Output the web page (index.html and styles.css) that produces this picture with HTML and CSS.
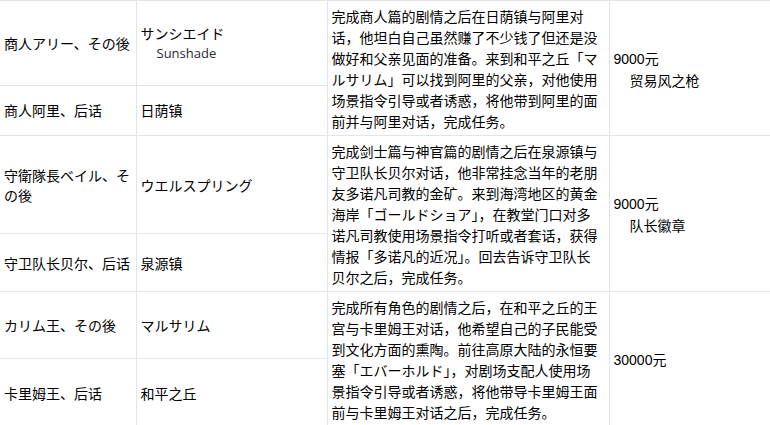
FILE: index.html
```html
<!DOCTYPE html>
<html lang="zh-CN">
<head>
<meta charset="utf-8">
<title>任务表</title>
<link rel="stylesheet" href="styles.css">
</head>
<body>
<table class="quests">
  <colgroup>
    <col class="c1"><col class="c2"><col class="c3"><col class="c4">
  </colgroup>
  <tbody>
    <tr class="r1a">
      <td lang="ja">商人アリー、その後</td>
      <td lang="ja">サンシエイド<span class="sub latin">Sunshade</span></td>
      <td class="desc" rowspan="2">完成商人篇的剧情之后在日荫镇与阿里对<br>话，他坦白自己虽然赚了不少钱了但还是没<br>做好和父亲见面的准备。来到和平之丘「マ<br>ルサリム」可以找到阿里的父亲，对他使用<br>场景指令引导或者诱惑，将他带到阿里的面<br>前并与阿里对话，完成任务。</td>
      <td class="reward" rowspan="2"><span class="num">9000</span>元<span class="sub">贸易风之枪</span></td>
    </tr>
    <tr class="r1b">
      <td>商人阿里、后话</td>
      <td>日荫镇</td>
    </tr>
    <tr class="r2a">
      <td lang="ja">守衛隊長ベイル、その後</td>
      <td lang="ja">ウエルスプリング</td>
      <td class="desc" rowspan="2">完成剑士篇与神官篇的剧情之后在泉源镇与<br>守卫队长贝尔对话，他非常挂念当年的老朋<br>友多诺凡司教的金矿。来到海湾地区的黄金<br>海岸「ゴールドショア」，在教堂门口对多<br>诺凡司教使用场景指令打听或者套话，获得<br>情报「多诺凡的近况」。回去告诉守卫队长<br>贝尔之后，完成任务。</td>
      <td class="reward" rowspan="2"><span class="num">9000</span>元<span class="sub">队长徽章</span></td>
    </tr>
    <tr class="r2b">
      <td>守卫队长贝尔、后话</td>
      <td>泉源镇</td>
    </tr>
    <tr class="r3a">
      <td lang="ja">カリム王、その後</td>
      <td lang="ja">マルサリム</td>
      <td class="desc" rowspan="2">完成所有角色的剧情之后，在和平之丘的王<br>宫与卡里姆王对话，他希望自己的子民能受<br>到文化方面的熏陶。前往高原大陆的永恒要<br>塞「エバーホルド」，对剧场支配人使用场<br>景指令引导或者诱惑，将他带导卡里姆王面<br>前与卡里姆王对话之后，完成任务。</td>
      <td class="reward" rowspan="2"><span class="num">30000</span>元</td>
    </tr>
    <tr class="r3b">
      <td>卡里姆王、后话</td>
      <td>和平之丘</td>
    </tr>
  </tbody>
</table>
</body>
</html>
```

FILE: styles.css
```css
html, body {
  margin: 0;
  padding: 0;
  background: #ffffff;
}

body {
  font-family: "Noto Sans CJK SC", "Noto Sans CJK JP", sans-serif;
  font-size: 14px;
  color: #000000;
  overflow: hidden;
}

.quests {
  border-collapse: collapse;
  table-layout: fixed;
  width: 800px;
}

.c1 { width: 136px; }
.c2 { width: 191px; }
.c3 { width: 282px; }
.c4 { width: 191px; }

.quests td {
  border: 1px solid #e1e5e9;
  padding: 0 4px;
  vertical-align: middle;
  line-height: 20px;
  white-space: nowrap;
}

.quests td:first-child {
  border-left: none;
  white-space: normal;
  padding-right: 2px;
}

.quests td.desc {
  padding: 5px 4px 3px 4px;
  line-height: 21px;
}

.quests td.reward {
  line-height: 21px;
  padding-top: 2px;
}

.r1a { height: 84px; }
.r1b { height: 50px; }
.r2a { height: 98px; }
.r2b { height: 58px; }
.r3a { height: 67px; }
.r3b { height: 68px; }

.sub {
  display: block;
  padding-left: 16px;
}

.latin {
  font-family: "Open Sans", "DejaVu Sans", sans-serif;
  font-size: 13px;
  color: #2a2a33;
}

.num {
  font-family: "Liberation Sans", Arial, sans-serif;
  font-size: 14px;
}
```
